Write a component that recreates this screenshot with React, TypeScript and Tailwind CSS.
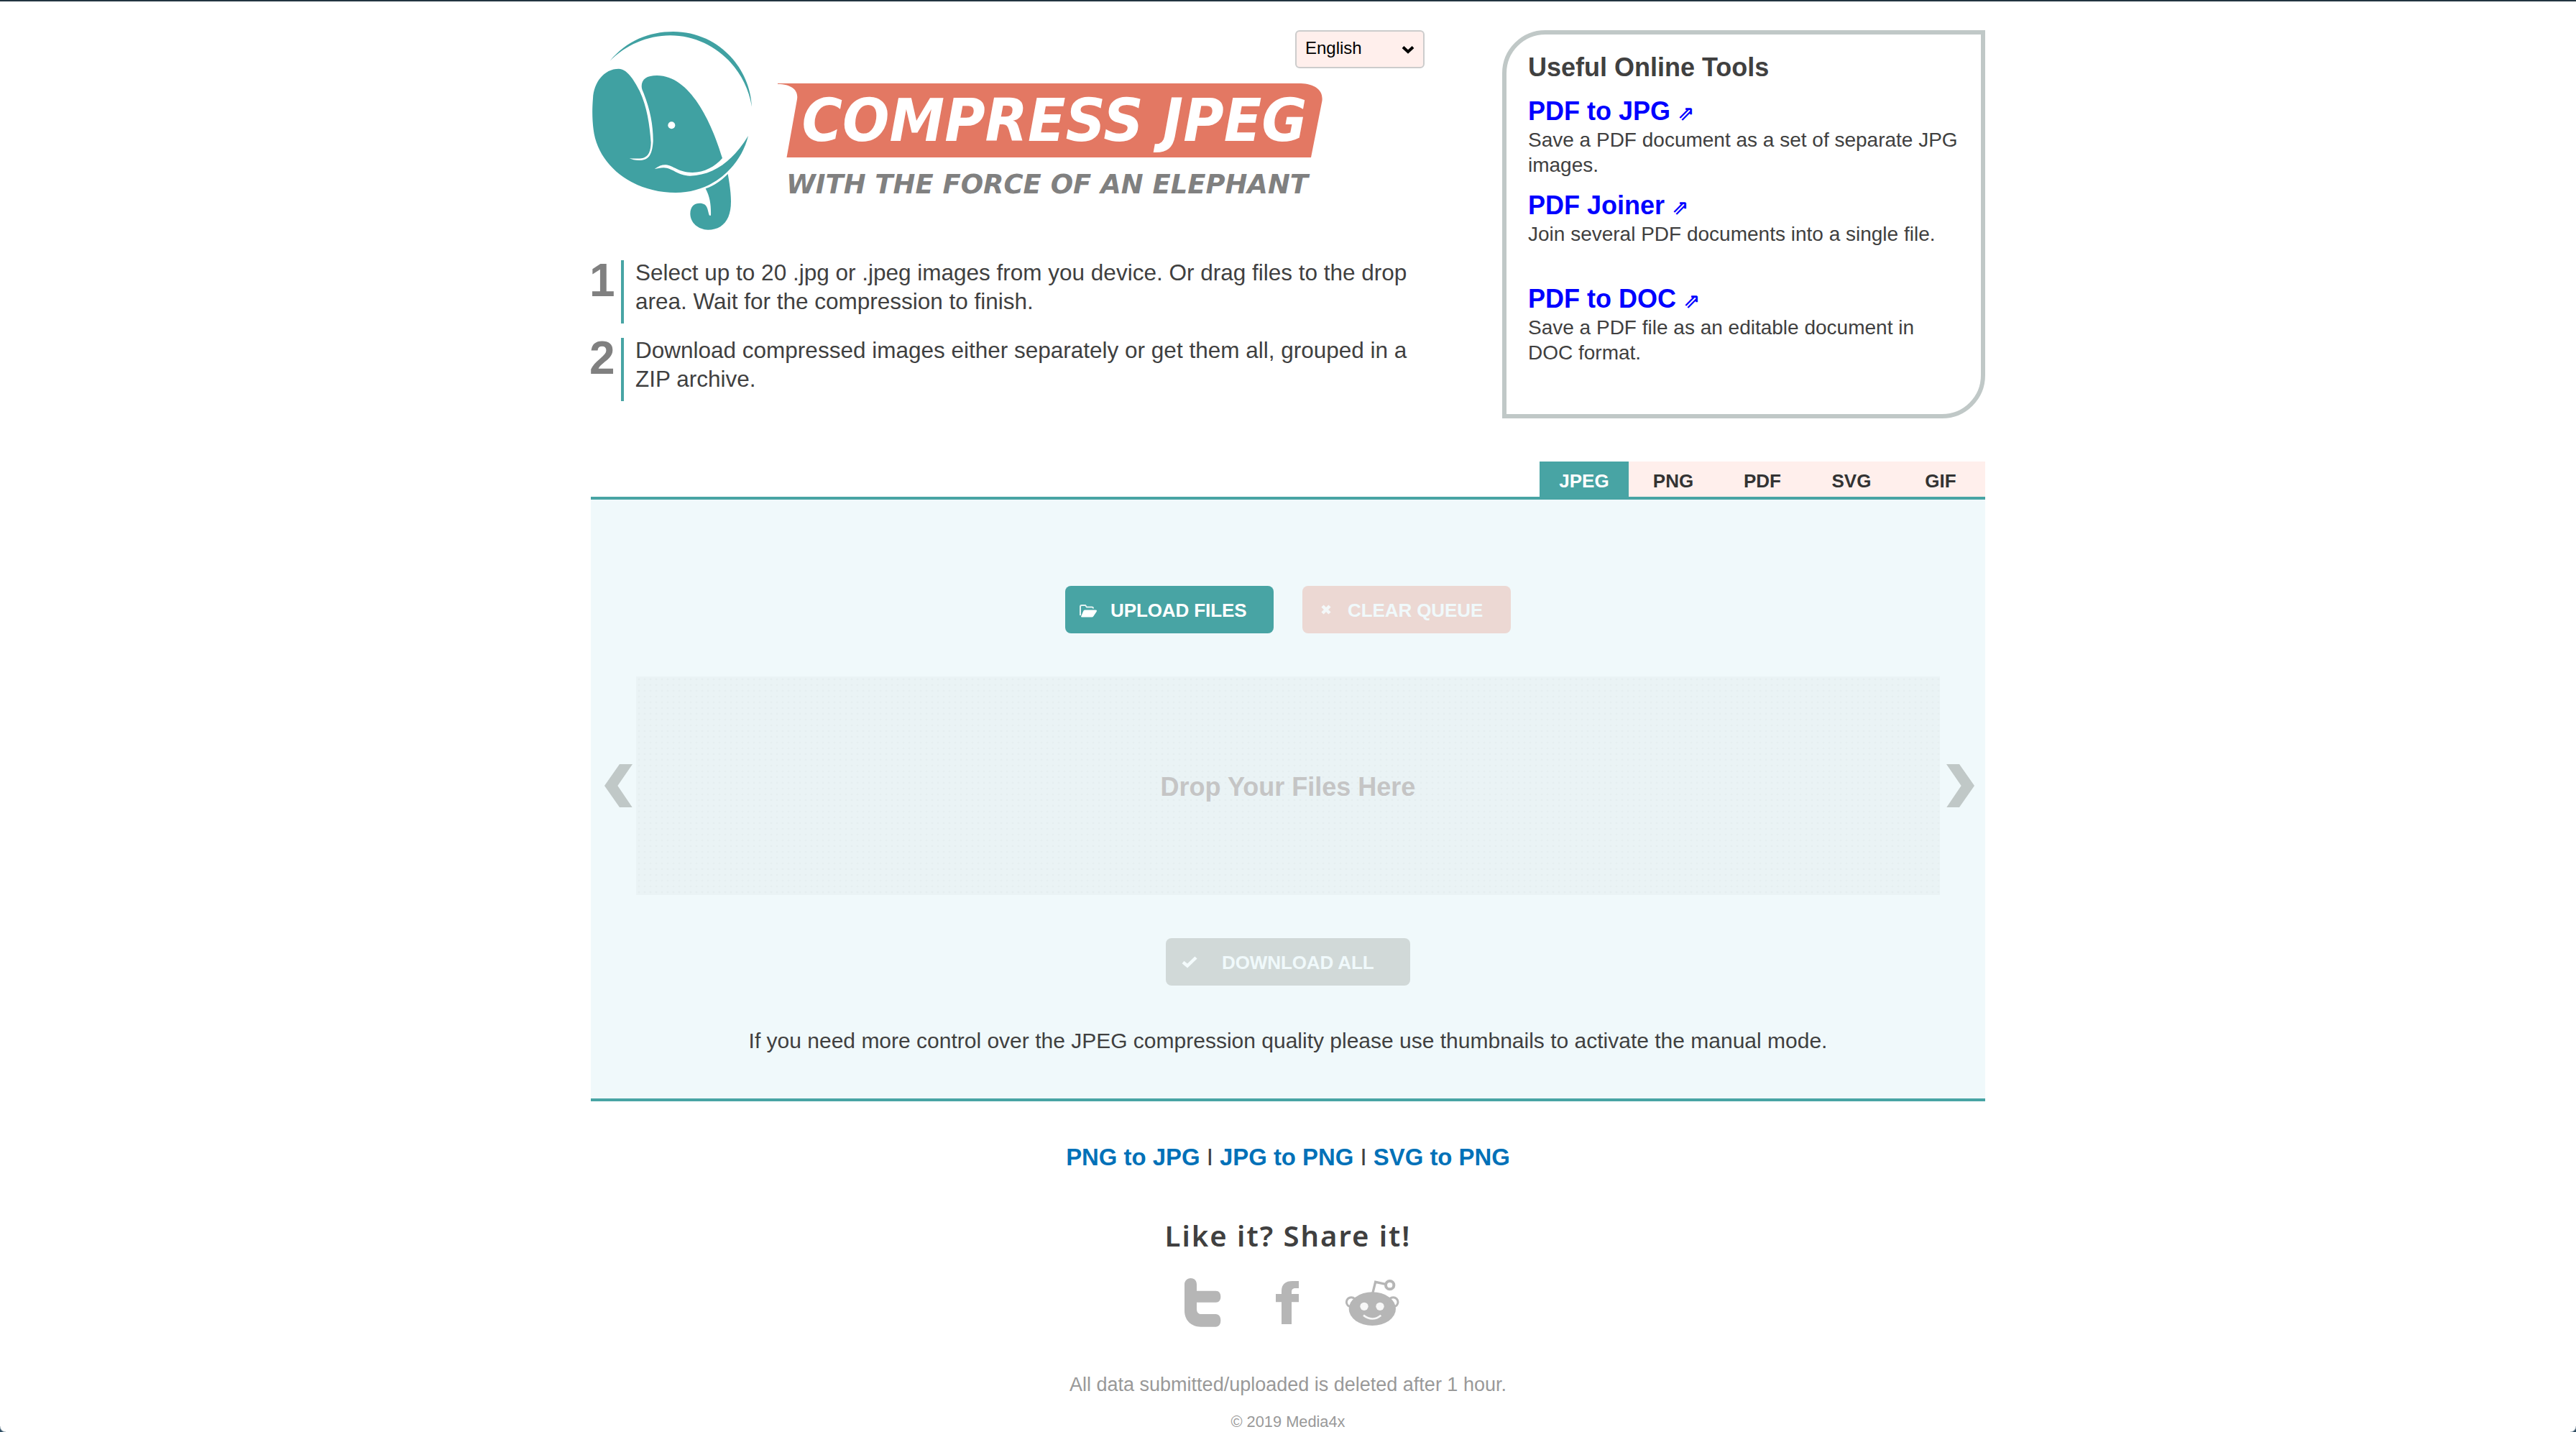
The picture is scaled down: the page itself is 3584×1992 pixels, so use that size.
import type { ReactNode } from "react";

const TOOLS = [
  { name: "PDF to JPG", text: "Save a PDF document as a set of separate JPG images." },
  { name: "PDF Joiner", text: "Join several PDF documents into a single file." },
  { name: "PDF to DOC", text: "Save a PDF file as an editable document in DOC format." },
];

const FORMATS = ["JPEG", "PNG", "PDF", "SVG", "GIF"];

function Elephant() {
  return (
    <svg className="h-[280px] w-[240px] shrink-0" viewBox="66 66 720 840" fill="#40a1a2">
      <path d="M146 194C215 110 310 72 410 72C590 72 730 215 738 386C712 215 565 88 398 88C300 88 210 130 146 194Z" />
      <path d="M183 227C120 227 78 285 75 350C71 400 72 440 77 480C95 630 240 744 420 744C570 744 690 640 723 507C660 610 580 672 480 674C430 674 405 640 370 640C355 640 345 644 332 645C350 632 365 627 380 628C410 630 430 660 490 660C540 660 585 635 615 600C570 450 480 255 342 255C300 255 278 270 278 300C278 312 283 320 287 330C315 400 327 470 326 530C322 590 305 609 268 609C250 609 238 606 227 601C250 602 270 602 285 599C308 593 316 570 317 535C312 460 300 385 270 320C245 270 215 227 183 227Z" />
      <path d="M638 666C655 760 655 810 640 845C625 880 595 899 555 899C515 899 481 870 481 832C481 800 500 788 520 788C555 788 552 815 561 839L567 839C568 800 565 765 545 727C580 715 610 695 638 666Z" />
      <circle cx="403" cy="463" r="15" fill="#fff" />
    </svg>
  );
}

function Banner() {
  return (
    <svg className="h-[227px] w-[920px]" viewBox="1062 95 920 227">
      <path fill="#e37863" d="M1082 116H1810C1828 117 1841 124 1839.500 140L1824 219H1094.500L1109 138C1111 126 1102 117 1082 117Z" />
      <text x="1115.500" y="195.700" fontSize="82.500" fontWeight="bold" fontStyle="oblique" fontFamily="DejaVu Sans" fill="#fff" textLength="703" lengthAdjust="spacingAndGlyphs">
        COMPRESS JPEG
      </text>
      <text x="1094" y="268.700" fontSize="38" fontWeight="bold" fontStyle="oblique" fontFamily="DejaVu Sans" fill="#808080" textLength="726" lengthAdjust="spacingAndGlyphs">
        WITH THE FORCE OF AN ELEPHANT
      </text>
    </svg>
  );
}

function Step({ n, children }: { n: string; children: ReactNode }) {
  return (
    <li className="flex h-[88px]">
      <span className="w-[42px] -ml-0.5 mr-0.5 pt-0.5 text-[64px] leading-[53px] font-bold text-[#808080]">{n}</span>
      <p className="flex-1 border-l-4 border-[#48a4a4] pl-4">
        <span className="-mt-[3px] block text-[31.5px] leading-10">{children}</span>
      </p>
    </li>
  );
}

function Chevron({ flip }: { flip?: boolean }) {
  return (
    <svg className={flip ? "h-[60px] w-[39px] -scale-x-100" : "h-[60px] w-[39px]"} viewBox="0 0 117 180">
      <path fill="#c0c8c7" d="M63 0H117L55 90L116 180H63L0 90Z" />
    </svg>
  );
}

export default function App() {
  return (
    <div className="relative h-[1992px] overflow-hidden border-t-2 border-[#223440] bg-white font-['Liberation_Sans',sans-serif] text-[#404040]">
      <div className="mx-auto w-[1940px]">
        <header className="flex h-[640px] justify-between pt-10">
          <div className="w-[1160px]">
            <div className="flex">
              <Elephant />
              <div className="flex w-[920px] flex-col">
                <button className="ml-auto flex h-[53px] w-[180px] items-center justify-between rounded-md border-2 border-[#ccc] bg-[#ffefec] pr-3 pb-[3px] pl-3 text-[24px] text-black">
                  English
                  <svg className="mt-1 h-[12px] w-[18px]" viewBox="0 0 18 12">
                    <path d="M2 2.500L9 9L16 2.500" fill="none" stroke="#000" strokeWidth="4" />
                  </svg>
                </button>
                <Banner />
              </div>
            </div>
            <ol className="mt-10 flex flex-col gap-5">
              <Step n="1">
                Select up to 20 .jpg or .jpeg images from you device. Or drag files to the drop
                <br />
                area. Wait for the compression to finish.
              </Step>
              <Step n="2">
                Download compressed images either separately or get them all, grouped in a
                <br />
                ZIP archive.
              </Step>
            </ol>
          </div>
          <aside className="h-[540px] w-[672px] rounded-tl-[60px] rounded-br-[60px] border-6 border-[#c0c8c7] pt-[26px] pr-[26px] pl-[30px]">
            <h2 className="text-[36px] leading-10 font-bold">Useful Online Tools</h2>
            <ul className="mt-[21px]">
              {TOOLS.map((tool) => (
                <li key={tool.name} className="h-[130.500px]">
                  <a className="flex items-baseline text-[36px] leading-10 font-bold whitespace-pre text-[#0000ff]">
                    {tool.name}
                    <span className="ml-[10px] font-['DejaVu_Sans'] text-[28px] leading-none">⇗</span>
                  </a>
                  <p className="mt-[2px] text-[28px] leading-[35.400px]">{tool.text}</p>
                </li>
              ))}
            </ul>
          </aside>
        </header>

        <nav className="flex h-[49px] justify-end text-[26px] font-bold">
          {FORMATS.map((f, i) => (
            <a
              key={f}
              className={
                i === 0
                  ? "flex w-[124px] items-center justify-center bg-[#48a4a4] pt-[5px] text-white"
                  : "flex w-[124px] items-center justify-center bg-[#ffefec] pt-[5px] text-[#333]"
              }
            >
              {f}
            </a>
          ))}
        </nav>

        <main className="h-[841px] border-y-4 border-[#48a4a4] bg-[#f0f9fb] pt-[120px]">
          <div className="flex justify-center gap-10 text-[26px] font-bold">
            <button className="flex h-[66px] w-[290px] items-center rounded-lg bg-[#48a4a4] text-white">
              <svg className="mt-1 ml-5 h-[18px] w-[24px]" viewBox="0 0 24 18">
                <path d="M1 15V3Q1 1 3 1H8L10 3.500H17Q19 3.500 19 5.500" fill="none" stroke="#fff" strokeWidth="2" opacity=".85" />
                <path fill="#fff" d="M7 7.500H22Q25 7.500 23.500 10L19.500 16Q18.500 17.500 17 17.500H3Q1.500 17.500 2.500 15.500L5.500 8.500Z" />
              </svg>
              <span className="ml-[19px] pt-0.5 tracking-[-0.100px]">UPLOAD FILES</span>
            </button>
            <button className="flex h-[66px] w-[290px] items-center rounded-lg bg-[#ecd8d3] text-[#f0f9fb]">
              <svg className="ml-[26px] h-[14px] w-[14px]" viewBox="0 0 14 14">
                <path d="M2 2L12 12M12 2L2 12" stroke="#f4f8f9" strokeWidth="4.500" />
              </svg>
              <span className="ml-[23px] pt-0.5 tracking-[-0.100px]">CLEAR QUEUE</span>
            </button>
          </div>

          <div className="mt-[60px] flex items-center pl-[19px]">
            <Chevron />
            <div className="mx-[5px] mr-[9px] flex h-[304px] w-[1814px] items-center justify-center bg-[#eaf3f5] bg-[radial-gradient(circle_at_center,#e5eef0_0.800px,transparent_1.800px)] bg-size-[8px_8px] pt-[4px] text-[36px] font-bold text-[#c5c5c5]">
              Drop Your Files Here
            </div>
            <Chevron flip />
          </div>

          <button className="mx-auto mt-[60px] flex h-[66px] w-[340px] items-center rounded-lg bg-[#d1d9d8] text-[26px] font-bold text-[#f0f9fb]">
            <svg className="ml-[22px] h-[17px] w-[22px]" viewBox="0 0 22 17">
              <path d="M2 8.500L8 13.500L20 2" fill="none" stroke="#f4fbfc" strokeWidth="4.500" />
            </svg>
            <span className="ml-[34px] pt-0.5 tracking-[-0.100px]">DOWNLOAD ALL</span>
          </button>
          <p className="mt-[56.500px] text-center text-[30px] leading-10">
            If you need more control over the JPEG compression quality please use thumbnails to activate the manual mode.
          </p>
        </main>

        <footer>
          <p className="mt-[58px] text-center text-[32.9px] leading-10">
            <a className="font-bold text-[#0071b8]">PNG to JPG</a> I <a className="font-bold text-[#0071b8]">JPG to PNG</a> I{" "}
            <a className="font-bold text-[#0071b8]">SVG to PNG</a>
          </p>
          <h3 className="mt-[64px] text-center font-['Noto_Sans',sans-serif] text-[40px] leading-[50px] font-semibold tracking-[2px]">Like it? Share it!</h3>
          <div className="mt-[28px] flex pl-[820px]">
            <svg className="h-20 w-[62px]" viewBox="36 36 186 240" fill="#b6b6b6">
              <path d="M54 80C54 63 68 54 80 54C94 54 105 64 105 80V107H185C198 107 205 117 205 131C205 145 198 155 185 155H105V182C105 197 112 204 126 204H184C198 204 205 215 205 230C205 246 197 257 184 257H122C82 257 54 230 54 190Z" />
            </svg>
            <svg className="ml-[66px] h-20 w-[42px]" viewBox="420 36 126 240" fill="#b6b6b6">
              <path d="M459 246V154H435V120H459V108C459 80 475 66 505 66H531V96H518C506 96 501 101 501 112V120H531V154H501V246Z" />
            </svg>
            <svg className="ml-[54px] h-20 w-[86px]" viewBox="708 36 258 240" fill="#b6b6b6">
              <ellipse cx="838" cy="182" rx="98" ry="70" />
              <g fill="none" stroke="#b6b6b6" strokeWidth="9">
                <circle cx="750" cy="154" r="20" />
                <circle cx="925" cy="154" r="20" />
                <path d="M839 118L851 70L893 79" strokeWidth="10" />
                <circle cx="911" cy="83" r="17" strokeWidth="12" />
              </g>
              <circle cx="804" cy="172" r="17" fill="#f7f7f7" />
              <circle cx="870" cy="172" r="17" fill="#f7f7f7" />
              <path d="M801 209Q838 238 874 209" fill="none" stroke="#f7f7f7" strokeWidth="8" />
            </svg>
          </div>
          <p className="mt-[57px] text-center text-[27px] leading-[34px] text-[#999]">All data submitted/uploaded is deleted after 1 hour.</p>
          <p className="mt-5 text-center text-[21.8px] leading-[30px] text-[#999]">© 2019 Media4x</p>
        </footer>
      </div>
      <div className="absolute bottom-0 left-0 size-2 bg-[radial-gradient(circle_at_100%_0%,#fff_7px,#2b4a60_9px)]" />
      <div className="absolute right-0 bottom-0 size-2 bg-[radial-gradient(circle_at_0%_0%,#fff_7px,#2b4a60_9px)]" />
    </div>
  );
}
